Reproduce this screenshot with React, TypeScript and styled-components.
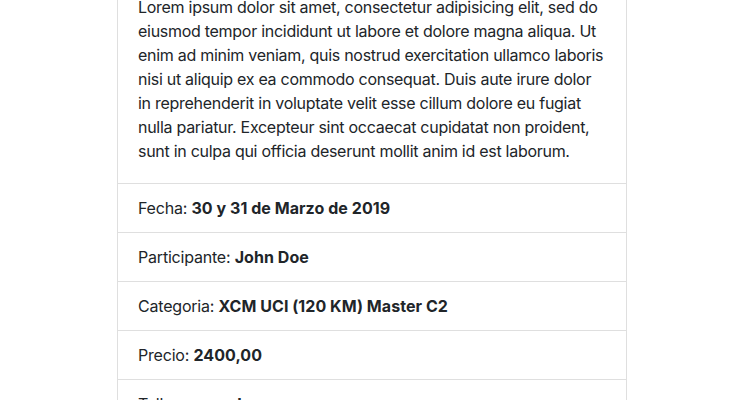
import React from "react";
import styled, { createGlobalStyle } from "styled-components";

const GlobalStyle = createGlobalStyle`
  html, body { margin: 0; padding: 0; background: #fff; overflow: hidden; }
  body {
    font-family: Inter, "Noto Sans", "Liberation Sans", sans-serif;
    font-size: 16px;
    line-height: 24px;
    color: #212529;
  }
`;

const Page = styled.div`
  display: flex;
  justify-content: center;
  margin-top: -26px;
`;

const Card = styled.div`
  width: 510px;
  box-sizing: border-box;
  border: 1px solid rgba(0, 0, 0, 0.125);
  border-radius: 4px;
  background: #fff;
`;

const CardBody = styled.div`
  padding: 20px;
`;

const Text = styled.p`
  margin: 0;
  letter-spacing: -0.28px;
`;

const Line = styled.span`
  display: block;
  white-space: nowrap;
`;

const List = styled.ul`
  list-style: none;
  margin: 0;
  padding: 0;
`;

const Item = styled.li`
  padding: 12px 20px;
  border-top: 1px solid rgba(0, 0, 0, 0.125);
  letter-spacing: -0.2px;
`;

const Strong = styled.b`
  font-weight: 700;
  letter-spacing: 0.05px;
`;

const lines = [
  "Lorem ipsum dolor sit amet, consectetur adipisicing elit, sed do",
  "eiusmod tempor incididunt ut labore et dolore magna aliqua. Ut",
  "enim ad minim veniam, quis nostrud exercitation ullamco laboris",
  "nisi ut aliquip ex ea commodo consequat. Duis aute irure dolor",
  "in reprehenderit in voluptate velit esse cillum dolore eu fugiat",
  "nulla pariatur. Excepteur sint occaecat cupidatat non proident,",
  "sunt in culpa qui officia deserunt mollit anim id est laborum.",
];

const rows: [string, string][] = [
  ["Fecha", "30 y 31 de Marzo de 2019"],
  ["Participante", "John Doe"],
  ["Categoria", "XCM UCI (120 KM) Master C2"],
  ["Precio", "2400,00"],
  ["Talla remera", "L"],
];

export default function App() {
  return (
    <>
      <GlobalStyle />
      <Page>
        <Card>
          <CardBody>
            <Text>
              {lines.map((l) => (
                <Line key={l}>{l}</Line>
              ))}
            </Text>
          </CardBody>
          <List>
            {rows.map(([k, v]) => (
              <Item key={k}>
                {k}: <Strong>{v}</Strong>
              </Item>
            ))}
          </List>
        </Card>
      </Page>
    </>
  );
}
